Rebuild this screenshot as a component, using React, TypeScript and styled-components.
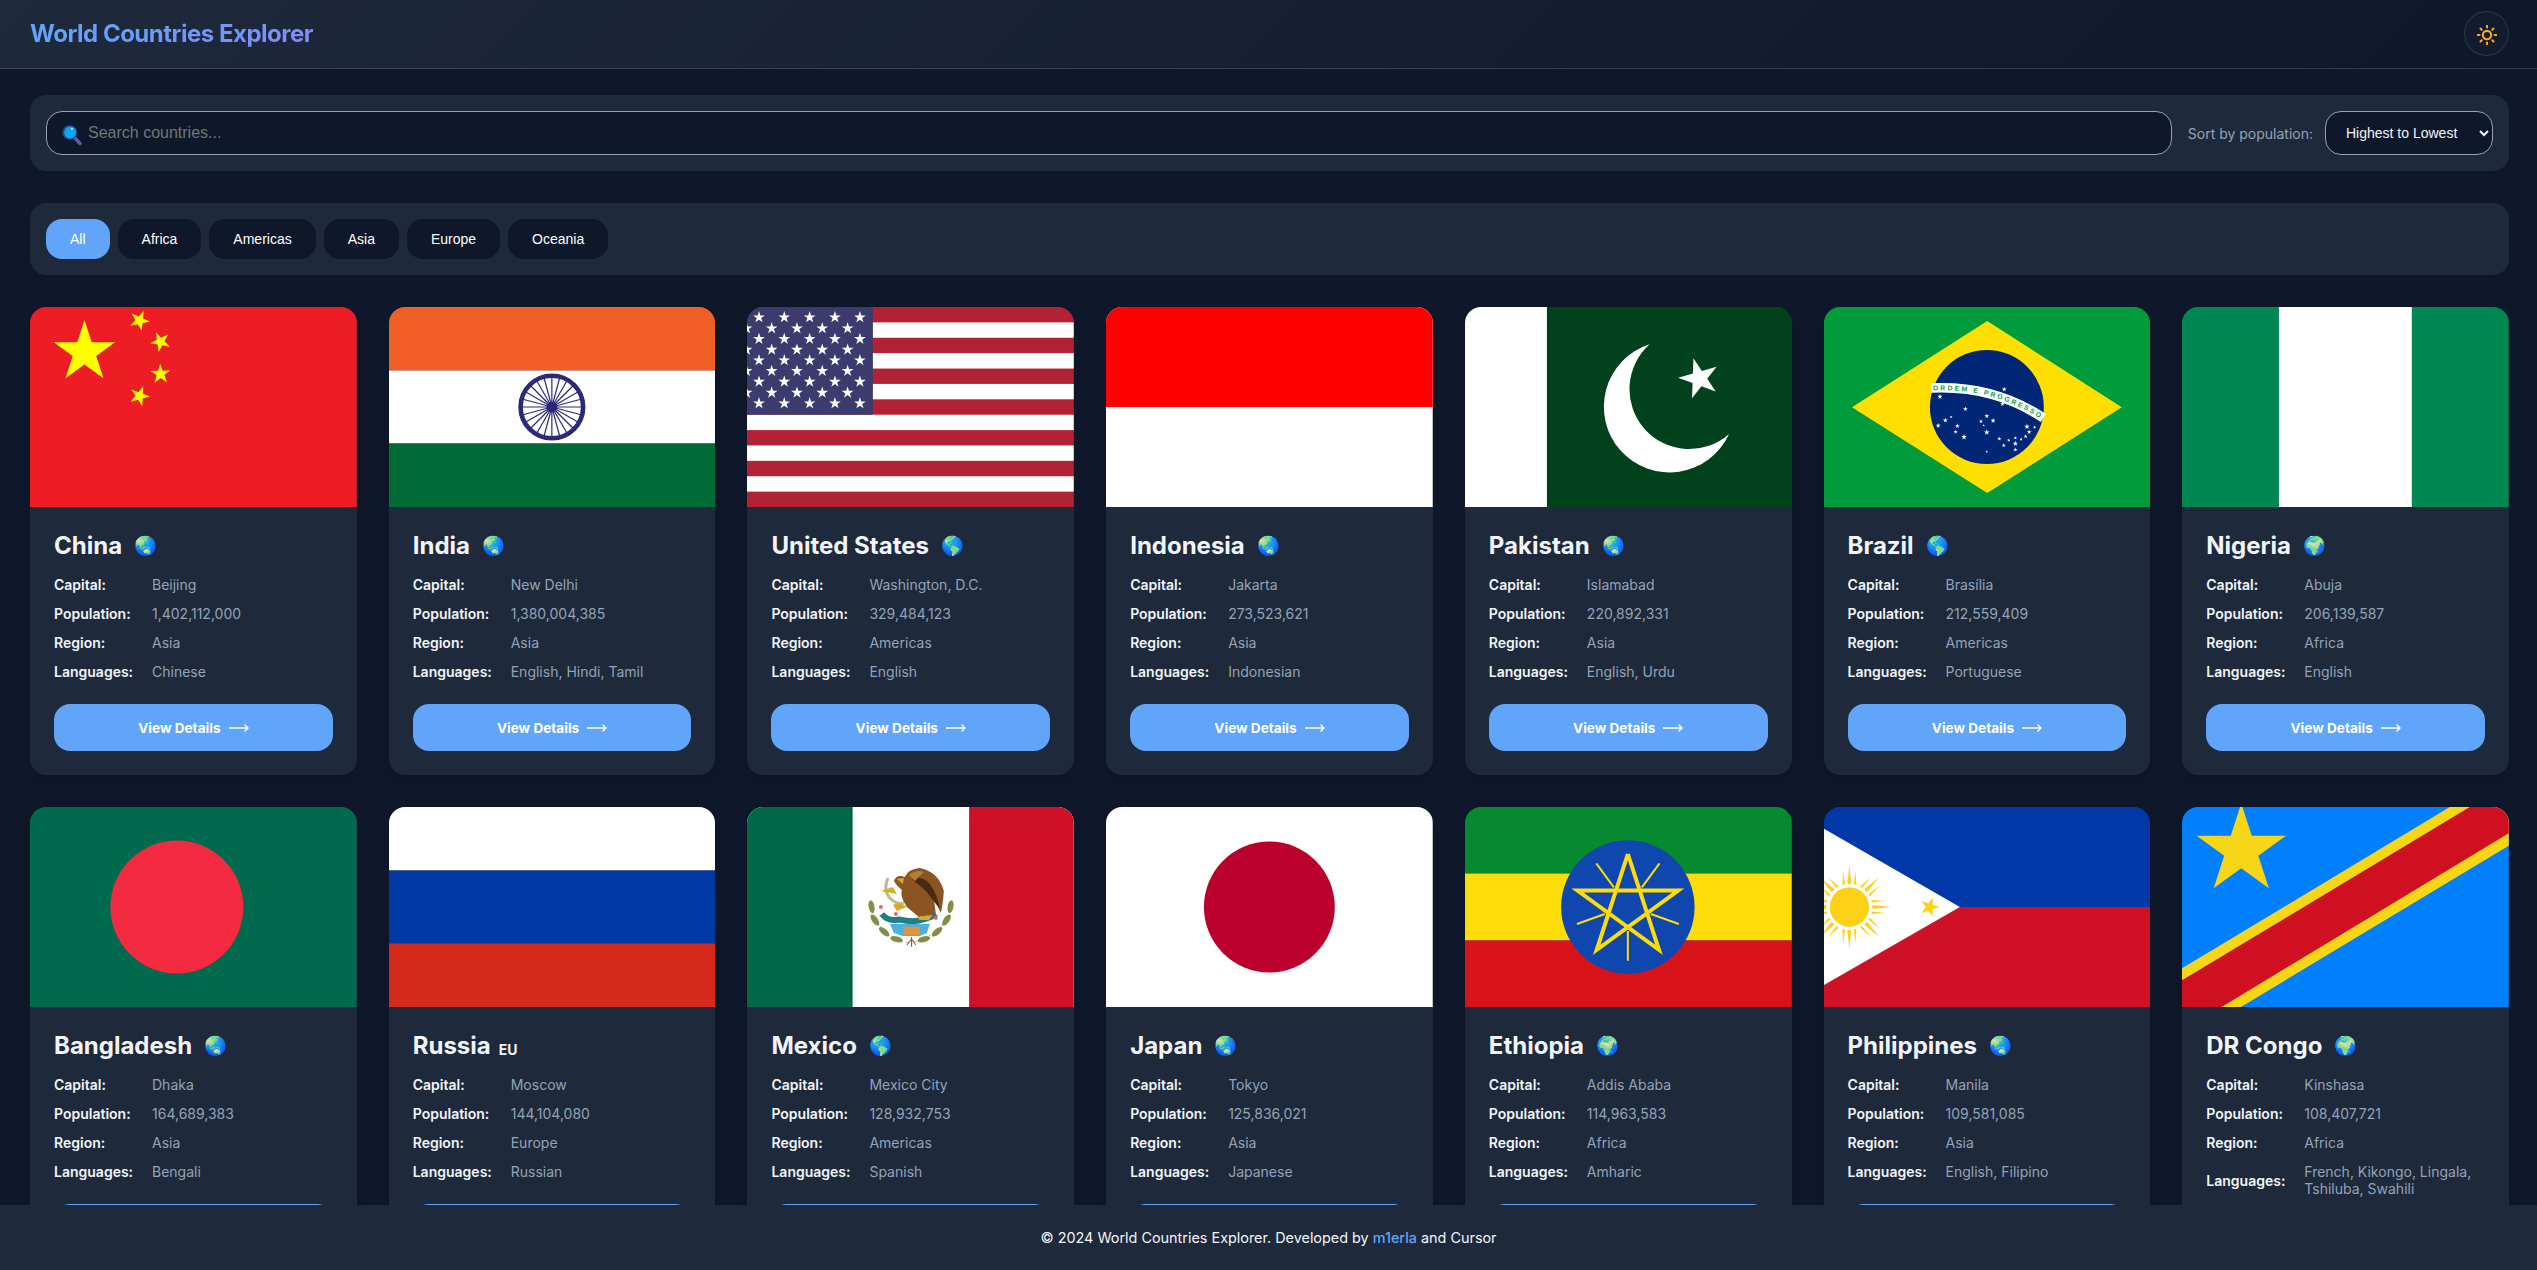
import React from 'react';
import styled, { createGlobalStyle } from 'styled-components';
import { FiSun } from 'react-icons/fi';

const GlobalStyle = createGlobalStyle`
  html, body {
    margin: 0;
    height: 100%;
    overflow: hidden;
    background: #0f172a;
    font-family: Inter, "Noto Sans", sans-serif;
  }
  * { box-sizing: border-box; }
  #root { height: 100%; }
`;

const star = (cx: number, cy: number, r: number, rot = 0, inner = 0.382) => {
  const pts: string[] = [];
  for (let i = 0; i < 10; i++) {
    const rad = i % 2 === 0 ? r : r * inner;
    const a = ((rot + i * 36) * Math.PI) / 180;
    pts.push(`${(cx + rad * Math.sin(a)).toFixed(2)},${(cy - rad * Math.cos(a)).toFixed(2)}`);
  }
  return pts.join(' ');
};

const FlagSvg: React.FC<{ children: React.ReactNode }> = ({ children }) => (
  <FlagDrawing viewBox="0 0 327 200" preserveAspectRatio="none">{children}</FlagDrawing>
);

const ChinaFlag = () => (
  <FlagSvg>
    <rect width="327" height="200" fill="#ee1c25" />
    <polygon points={star(54.5, 45.2, 32.3)} fill="#ffff00" />
    <polygon points={star(109.6, 13.5, 10.5, -120)} fill="#ffff00" />
    <polygon points={star(130.6, 34.7, 10.5, -98)} fill="#ffff00" />
    <polygon points={star(130.6, 67, 10.5, -74)} fill="#ffff00" />
    <polygon points={star(109.6, 89, 10.5, -51)} fill="#ffff00" />
  </FlagSvg>
);

const IndiaFlag = () => (
  <FlagSvg>
    <rect width="327" height="63.5" fill="#f15f27" />
    <rect y="63.5" width="327" height="73" fill="#fff" />
    <rect y="136.5" width="327" height="63.5" fill="#006b36" />
    <circle cx="163" cy="100" r="31.3" fill="#fff" stroke="#2b2a78" strokeWidth="4.6" />
    <circle cx="163" cy="100" r="5.5" fill="#2b2a78" />
    {Array.from({ length: 24 }).map((_, i) => {
      const a = (i * 15 * Math.PI) / 180;
      return (
        <line
          key={i}
          x1={163}
          y1={100}
          x2={163 + 30 * Math.sin(a)}
          y2={100 - 30 * Math.cos(a)}
          stroke="#2b2a78"
          strokeWidth="1.2"
        />
      );
    })}
  </FlagSvg>
);

const UsaFlag = () => {
  const oddRows = [10.3, 32, 53.3, 74.7, 96.3];
  const oddCols = [12, 37.3, 62.7, 88, 113];
  const evenRows = [21.3, 42.7, 64, 85.7];
  const evenCols = [-0.5, 24.7, 50, 75.3, 100.7];
  return (
    <FlagSvg>
      <rect width="327" height="200" fill="#b22234" />
      {[1, 3, 5, 7, 9, 11].map((i) => (
        <rect key={i} y={(i * 200) / 13} width="327" height={200 / 13} fill="#fff" />
      ))}
      <rect width="126" height="107.7" fill="#3c3b6e" />
      {oddRows.flatMap((y) =>
        oddCols.map((x) => <polygon key={`o${x}${y}`} points={star(x, y, 6.2)} fill="#fff" />)
      )}
      {evenRows.flatMap((y) =>
        evenCols.map((x) => <polygon key={`e${x}${y}`} points={star(x, y, 6.2)} fill="#fff" />)
      )}
    </FlagSvg>
  );
};

const IndonesiaFlag = () => (
  <FlagSvg>
    <rect width="327" height="200" fill="#fff" />
    <rect width="327" height="100" fill="#ff0000" />
  </FlagSvg>
);

const PakistanFlag = () => (
  <FlagSvg>
    <rect width="327" height="200" fill="#01411c" />
    <rect width="82" height="200" fill="#fff" />
    <path d="M184.8 37.3A65.6 65.6 0 1 0 264.3 127A59.5 59.5 0 1 1 184.8 37.3Z" fill="#fff" />
    <polygon points={star(234.4, 71.5, 21, -16)} fill="#fff" />
  </FlagSvg>
);

const brazilStars = [
  [1219, 268, 2.6], [1075, 290, 2.8], [1215, 312, 2.4], [1132, 327, 2.6], [1180, 348, 2.6], [1167, 364, 2.2],
  [1194, 362, 2.6], [1173, 376, 1.4], [1087, 361, 2.6], [1100, 351, 1.6], [1071, 377, 2.6], [1114, 378, 2.6],
  [1110, 396, 2.2], [1129, 411, 3], [1180, 397, 3], [1208, 416, 2.2], [1229, 421, 1.8], [1218, 436, 2.2],
  [1244, 431, 2.8], [1244, 414, 2], [1257, 418, 1.8], [1267, 409, 2.2], [1275, 396, 2.6], [1270, 380, 2.8],
  [1287, 382, 1.8], [1244, 449, 2.2], [1180, 455, 1.4],
];

const BrazilFlag = () => (
  <FlagSvg>
    <rect width="327" height="200" fill="#009c3b" />
    <polygon points="163.4,14 298,100.3 163.4,186 28,100.3" fill="#ffdf00" />
    <ellipse cx="163" cy="100" rx="57" ry="57" fill="#002776" />
    <path d="M107.5 81Q170 78 219.5 111" fill="none" stroke="#fff" strokeWidth="9.6" />
    <path id="brazil-band" d="M109 83.4Q170 80.4 219 113.4" fill="none" />
    <BrazilMotto>
      <textPath href="#brazil-band" textLength="112" lengthAdjust="spacing">ORDEM E PROGRESSO</textPath>
    </BrazilMotto>
    {brazilStars.map(([x, y, r]) => (
      <polygon key={`${x}${y}`} points={star((x - 815) / 2.24, y / 3 - 7, r)} fill="#fff" />
    ))}
  </FlagSvg>
);

const NigeriaFlag = () => (
  <FlagSvg>
    <rect width="327" height="200" fill="#008751" />
    <rect x="97" width="133" height="200" fill="#fff" />
  </FlagSvg>
);

const BangladeshFlag = () => (
  <FlagSvg>
    <rect width="327" height="200" fill="#006a4e" />
    <circle cx="147" cy="100" r="66.5" fill="#f42a41" />
  </FlagSvg>
);

const RussiaFlag = () => (
  <FlagSvg>
    <rect width="327" height="63.5" fill="#fff" />
    <rect y="63.5" width="327" height="73" fill="#0039a6" />
    <rect y="136.5" width="327" height="63.5" fill="#d52b1e" />
  </FlagSvg>
);

const wreathLeaves = [
  [124.7, 99.7, 80], [128, 113, 55], [137.3, 124.7, 40], [149.7, 132.3, 15],
  [203.7, 99.7, -80], [199.7, 113, -55], [190.3, 124.7, -40], [177, 132.3, -15],
];

const MexicoFlag = () => (
  <FlagSvg>
    <rect width="327" height="200" fill="#fff" />
    <rect width="105.7" height="200" fill="#006847" />
    <rect x="222.3" width="104.7" height="200" fill="#ce1126" />
    {/* wreath */}
    <path d="M124 96Q128 128 163 136Q199 128 205 96" fill="none" stroke="#c9a94a" strokeWidth="0.9" strokeDasharray="3 5" />
    {wreathLeaves.map(([x, y, r]) => (
      <ellipse key={`${x}${y}`} cx={x} cy={y} rx="6.5" ry="2.9" fill="#7f8f45" transform={`rotate(${r} ${x} ${y})`} />
    ))}
    {/* water and base */}
    <path d="M143 117L183 117L180 126L173 129H156L147 126Z" fill="#4fb0dc" />
    <rect x="156.3" y="119.7" width="16.7" height="8.6" fill="#de9440" />
    <path d="M164.7 130V139.7M160 138L164.7 132L169 138" stroke="#b5473c" strokeWidth="1.1" fill="none" />
    {/* cactus */}
    <path d="M135 107Q141 115 152 112.5Q168 116 178 112Q186 110 189 107" fill="none" stroke="#1f7f86" strokeWidth="6" />
    <circle cx="134" cy="100" r="2" fill="#f0627a" />
    <circle cx="149" cy="107" r="2" fill="#f0627a" />
    <circle cx="189" cy="111" r="2" fill="#f0627a" />
    {/* snake */}
    <path d="M141 71Q136 84 143 91Q150 98 157 96" fill="none" stroke="#b9bf8e" strokeWidth="3" />
    <path d="M134 84L146 80L150 87Z" fill="#d9a927" />
    <path d="M146 98Q152 94 160 100L150 104Z" fill="#d9a927" />
    {/* eagle */}
    <path d="M147 74Q150 67 158 70Q161 62 173 61Q192 65 197 84Q196 98 194 106L187 91L189 107L172 110L160 100Q153 90 155 83Q150 79 147 74Z" fill="#8a5522" />
    <path d="M165 72Q175 68 183 77Q191 88 193 102L179 84Z" fill="#4a2a10" />
    <path d="M162 68Q170 62 177 65L168 74Z" fill="#b87c34" />
    <path d="M150 72L157 71L156 77Z" fill="#d9a927" />
    <path d="M170 110L186 108L182 113L173 113Z" fill="#d9a927" />
  </FlagSvg>
);

const JapanFlag = () => (
  <FlagSvg>
    <rect width="327" height="200" fill="#fff" />
    <circle cx="163.5" cy="100" r="65.5" fill="#bc002d" />
  </FlagSvg>
);

const EthiopiaFlag = () => {
  const tips = [0, 2, 4, 1, 3, 0].map((i) => {
    const a = (i * 72 * Math.PI) / 180;
    return `${163 + 53 * Math.sin(a)},${100 - 53 * Math.cos(a)}`;
  });
  return (
    <FlagSvg>
      <rect width="327" height="66.5" fill="#078930" />
      <rect y="66.5" width="327" height="67" fill="#fcdd09" />
      <rect y="133.5" width="327" height="66.5" fill="#da121a" />
      <ellipse cx="163" cy="100" rx="66.8" ry="66.7" fill="#0f47af" />
      <polyline points={tips.join(' ')} fill="none" stroke="#fcdd09" strokeWidth="4" />
      <g stroke="#fcdd09" strokeWidth="2">
        <line x1="131.4" y1="56.3" x2="149" y2="80.3" />
        <line x1="194.7" y1="56.3" x2="177" y2="80.3" />
        <line x1="112" y1="117" x2="140" y2="107" />
        <line x1="214" y1="117" x2="186" y2="107" />
        <line x1="163" y1="124" x2="163" y2="153.7" />
      </g>
    </FlagSvg>
  );
};

const PhilippinesFlag = () => (
  <FlagSvg>
    <rect width="327" height="100" fill="#0038a8" />
    <rect y="100" width="327" height="100" fill="#ce1126" />
    <polygon points="0,21.7 136,100 0,178" fill="#fff" />
    <circle cx="25.4" cy="100" r="19.7" fill="#fcd116" />
    {Array.from({ length: 8 }).map((_, i) => (
      <g key={i} transform={`rotate(${i * 45} 25.4 100)`} fill="#fcd116">
        <polygon points="23.4,77 25.4,58 27.4,77" />
        <polygon points="18.4,78 19.3,63.7 21,77.5" />
        <polygon points="29.8,77.5 31.5,63.7 32.4,78" />
      </g>
    ))}
    <polygon points={star(105.7, 100, 10, 90)} fill="#fcd116" />
  </FlagSvg>
);

const CongoFlag = () => (
  <FlagSvg>
    <rect width="327" height="200" fill="#007fff" />
    <polygon points="268,0 327,0 327,38.7 59,200 0,200 0,161.3" fill="#f7d618" />
    <polygon points="288,0 327,0 327,26.3 39.7,200 0,200 0,173.3" fill="#ce1021" />
    <polygon points={star(59.3, 43.3, 47)} fill="#f7d618" />
  </FlagSvg>
);

interface ICountry {
  name: string;
  capital: string;
  population: string;
  region: string;
  languages: string;
  badge: string;
  flag: React.FC;
}

const countries: ICountry[] = [
  { name: 'China', capital: 'Beijing', population: '1,402,112,000', region: 'Asia', languages: 'Chinese', badge: '🌏', flag: ChinaFlag },
  { name: 'India', capital: 'New Delhi', population: '1,380,004,385', region: 'Asia', languages: 'English, Hindi, Tamil', badge: '🌏', flag: IndiaFlag },
  { name: 'United States', capital: 'Washington, D.C.', population: '329,484,123', region: 'Americas', languages: 'English', badge: '🌎', flag: UsaFlag },
  { name: 'Indonesia', capital: 'Jakarta', population: '273,523,621', region: 'Asia', languages: 'Indonesian', badge: '🌏', flag: IndonesiaFlag },
  { name: 'Pakistan', capital: 'Islamabad', population: '220,892,331', region: 'Asia', languages: 'English, Urdu', badge: '🌏', flag: PakistanFlag },
  { name: 'Brazil', capital: 'Brasília', population: '212,559,409', region: 'Americas', languages: 'Portuguese', badge: '🌎', flag: BrazilFlag },
  { name: 'Nigeria', capital: 'Abuja', population: '206,139,587', region: 'Africa', languages: 'English', badge: '🌍', flag: NigeriaFlag },
  { name: 'Bangladesh', capital: 'Dhaka', population: '164,689,383', region: 'Asia', languages: 'Bengali', badge: '🌏', flag: BangladeshFlag },
  { name: 'Russia', capital: 'Moscow', population: '144,104,080', region: 'Europe', languages: 'Russian', badge: 'EU', flag: RussiaFlag },
  { name: 'Mexico', capital: 'Mexico City', population: '128,932,753', region: 'Americas', languages: 'Spanish', badge: '🌎', flag: MexicoFlag },
  { name: 'Japan', capital: 'Tokyo', population: '125,836,021', region: 'Asia', languages: 'Japanese', badge: '🌏', flag: JapanFlag },
  { name: 'Ethiopia', capital: 'Addis Ababa', population: '114,963,583', region: 'Africa', languages: 'Amharic', badge: '🌍', flag: EthiopiaFlag },
  { name: 'Philippines', capital: 'Manila', population: '109,581,085', region: 'Asia', languages: 'English, Filipino', badge: '🌏', flag: PhilippinesFlag },
  { name: 'DR Congo', capital: 'Kinshasa', population: '108,407,721', region: 'Africa', languages: 'French, Kikongo, Lingala, Tshiluba, Swahili', badge: '🌍', flag: CongoFlag },
];

const regions = ['All', 'Africa', 'Americas', 'Asia', 'Europe', 'Oceania'];

const AppWrapper = styled.div`
  height: 100%;
  display: flex;
  flex-direction: column;
  color: #f1f5f9;
  background: #0f172a;
`;

const Header = styled.header`
  flex: none;
  height: 69px;
  display: flex;
  align-items: center;
  justify-content: space-between;
  padding: 0 28px 1px 30px;
  background: linear-gradient(135deg, #1e293b, #0f172a);
  border-bottom: 1px solid rgba(148, 163, 184, 0.25);
`;

const Title = styled.h1`
  margin: 0;
  font-size: 24px;
  font-weight: 700;
  letter-spacing: -0.5px;
  background: linear-gradient(90deg, #60a5fa, #818cf8);
  -webkit-background-clip: text;
  background-clip: text;
  color: transparent;
`;

const ThemeButton = styled.button`
  width: 45px;
  height: 45px;
  padding: 2px 0 0;
  border-radius: 50%;
  display: flex;
  align-items: center;
  justify-content: center;
  background: #131c2e;
  border: 1px solid rgba(148, 163, 184, 0.2);
  color: #fba825;
`;

const Main = styled.main`
  flex: 1;
  min-height: 0;
  overflow: hidden;
  padding: 26px 28px 0 30px;
`;

const Panel = styled.section`
  background: #1e293b;
  border-radius: 16px;
  padding: 16px;
  display: flex;
  align-items: center;
`;

const SearchPanel = styled(Panel)`
  gap: 16px;
`;

const FilterPanel = styled(Panel)`
  margin-top: 32px;
  gap: 8px;
`;

const SearchBox = styled.div`
  position: relative;
  flex: 1;
`;

const SearchGlyph = styled.svg`
  position: absolute;
  left: 16px;
  top: 14px;
  width: 20px;
  height: 20px;
`;

const SearchInput = styled.input`
  width: 100%;
  height: 44px;
  padding: 0 16px 0 41px;
  font: 400 16px "Liberation Sans", Arial, sans-serif;
  color: #fff;
  background: #0f172a;
  border: 1px solid #94a3b8;
  border-radius: 16px;
  outline: none;
`;

const SortLabel = styled.label`
  font-size: 14px;
  color: #94a3b8;
  white-space: nowrap;
  margin-right: -4px;
`;

const SortSelect = styled.select`
  width: 168px;
  height: 44px;
  padding: 0 16px;
  font: 400 14px "Liberation Sans", Arial, sans-serif;
  color: #f1f5f9;
  background: #0f172a;
  border: 1px solid #94a3b8;
  border-radius: 16px;
  outline: none;
`;

const FilterButton = styled.button<{ $active?: boolean }>`
  height: 40px;
  padding: 0 24px;
  border: none;
  border-radius: 16px;
  font: 400 14px "Liberation Sans", Arial, sans-serif;
  color: #fff;
  background: ${(p) => (p.$active ? '#60a5fa' : '#0f172a')};
`;

const CardGrid = styled.div`
  margin-top: 32px;
  display: grid;
  grid-template-columns: repeat(7, 1fr);
  gap: 32px;
`;

const Card = styled.article`
  background: #1e293b;
  border-radius: 16px;
  overflow: hidden;
  box-shadow: 0 4px 6px rgba(0, 0, 0, 0.1);
`;

const FlagDrawing = styled.svg`
  display: block;
  width: 100%;
  height: 200px;
`;

const BrazilMotto = styled.text`
  font: 700 6.8px "Liberation Sans", sans-serif;
  fill: #009c3b;
`;

const CardBody = styled.div`
  padding: 24px;
`;

const CountryName = styled.h2`
  margin: 0 0 16px;
  height: 29px;
  display: flex;
  align-items: center;
  gap: 12px;
  font-size: 24px;
  line-height: 29px;
  font-weight: 700;
  color: #f1f5f9;
`;

const Badge = styled.span<{ $text?: boolean }>`
  font-size: ${(p) => (p.$text ? '14px' : '18.4px')};
  font-weight: 700;
  ${(p) => p.$text && 'margin-left: -4px; transform: translateY(4px);'}
`;

const InfoList = styled.div`
  display: flex;
  flex-direction: column;
  gap: 12px;
`;

const InfoRow = styled.div`
  display: flex;
  align-items: center;
  font-size: 14px;
  line-height: 17px;
`;

const InfoLabel = styled.span`
  flex: none;
  width: 98px;
  font-weight: 600;
  color: #f1f5f9;
`;

const InfoValue = styled.span`
  color: #94a3b8;
`;

const DetailsButton = styled.button`
  margin-top: 24px;
  width: 100%;
  height: 47px;
  display: flex;
  align-items: center;
  justify-content: center;
  gap: 8px;
  border: none;
  border-radius: 16px;
  font: 700 13.6px Inter, sans-serif;
  color: #fff;
  background: #60a5fa;
`;

const Footer = styled.footer`
  flex: none;
  height: 65px;
  display: flex;
  align-items: center;
  justify-content: center;
  background: #1e293b;
  font-size: 14.4px;
  color: #f1f5f9;
  white-space: pre;
`;

const FooterLink = styled.a`
  color: #60a5fa;
  font-weight: 500;
`;

const ArrowIcon = () => (
  <svg width="20" height="10" viewBox="0 0 20 10" fill="none" stroke="#fff" strokeWidth="1.3">
    <path d="M0 5H19M15.5 1.5L19 5L15.5 8.5" />
  </svg>
);

const MagnifierIcon = () => (
  <SearchGlyph viewBox="0 0 20 20">
    <path d="M12.5 12.5L18 18.5" stroke="#6558a3" strokeWidth="3.4" strokeLinecap="round" />
    <circle cx="7.7" cy="7.6" r="7.4" fill="#3b3a8c" />
    <circle cx="8.2" cy="7.6" r="6" fill="#03a9f4" />
    <circle cx="10" cy="4" r="0.9" fill="#fff" />
  </SearchGlyph>
);

const CountryCard: React.FC<{ country: ICountry }> = ({ country }) => {
  const Flag = country.flag;
  return (
    <Card>
      <Flag />
      <CardBody>
        <CountryName>
          {country.name}
          <Badge $text={country.badge === 'EU'}>{country.badge}</Badge>
        </CountryName>
        <InfoList>
          <InfoRow><InfoLabel>Capital:</InfoLabel><InfoValue>{country.capital}</InfoValue></InfoRow>
          <InfoRow><InfoLabel>Population:</InfoLabel><InfoValue>{country.population}</InfoValue></InfoRow>
          <InfoRow><InfoLabel>Region:</InfoLabel><InfoValue>{country.region}</InfoValue></InfoRow>
          <InfoRow><InfoLabel>Languages:</InfoLabel><InfoValue>{country.languages}</InfoValue></InfoRow>
        </InfoList>
        <DetailsButton>
          View Details
          <ArrowIcon />
        </DetailsButton>
      </CardBody>
    </Card>
  );
};

export default function App() {
  return (
    <AppWrapper>
      <GlobalStyle />
      <Header>
        <Title>World Countries Explorer</Title>
        <ThemeButton aria-label="Toggle theme">
          <FiSun size={20} strokeWidth={2.5} />
        </ThemeButton>
      </Header>
      <Main>
        <SearchPanel>
          <SearchBox>
            <SearchInput placeholder="Search countries..." />
            <MagnifierIcon />
          </SearchBox>
          <SortLabel>Sort by population:</SortLabel>
          <SortSelect defaultValue="desc">
            <option value="desc">Highest to Lowest</option>
            <option value="asc">Lowest to Highest</option>
          </SortSelect>
        </SearchPanel>
        <FilterPanel>
          {regions.map((region) => (
            <FilterButton key={region} $active={region === 'All'}>{region}</FilterButton>
          ))}
        </FilterPanel>
        <CardGrid>
          {countries.map((country) => (
            <CountryCard key={country.name} country={country} />
          ))}
        </CardGrid>
      </Main>
      <Footer>
        © 2024 World Countries Explorer. Developed by <FooterLink>m1erla</FooterLink> and Cursor
      </Footer>
    </AppWrapper>
  );
}
